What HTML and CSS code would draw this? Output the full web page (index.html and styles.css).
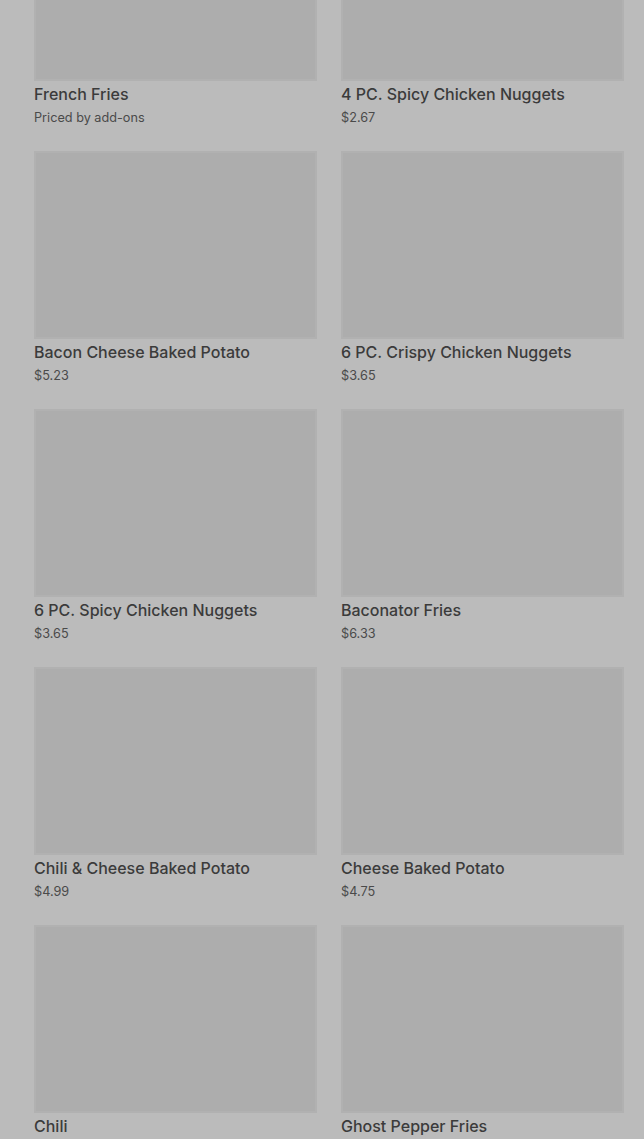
FILE: index.html
```html
<!DOCTYPE html>
<html lang="en">
<head>
  <meta charset="UTF-8">
  <meta name="viewport" content="width=device-width, initial-scale=1.0">
  <title>Menu</title>
  <link rel="stylesheet" href="styles.css">
</head>
<body>

  <!-- menu items, page is scrolled a bit -->
  <main class="menu">
    <div class="menu-grid">
      <div class="item">
        <div class="item-img"></div>
        <h3>French Fries</h3>
        <p>Priced by add-ons</p>
      </div>
      <div class="item">
        <div class="item-img"></div>
        <h3>4 PC. Spicy Chicken Nuggets</h3>
        <p>$2.67</p>
      </div>
      <div class="item">
        <div class="item-img"></div>
        <h3>Bacon Cheese Baked Potato</h3>
        <p>$5.23</p>
      </div>
      <div class="item">
        <div class="item-img"></div>
        <h3>6 PC. Crispy Chicken Nuggets</h3>
        <p>$3.65</p>
      </div>
      <div class="item">
        <div class="item-img"></div>
        <h3>6 PC. Spicy Chicken Nuggets</h3>
        <p>$3.65</p>
      </div>
      <div class="item">
        <div class="item-img"></div>
        <h3>Baconator Fries</h3>
        <p>$6.33</p>
      </div>
      <div class="item">
        <div class="item-img"></div>
        <h3>Chili &amp; Cheese Baked Potato</h3>
        <p>$4.99</p>
      </div>
      <div class="item">
        <div class="item-img"></div>
        <h3>Cheese Baked Potato</h3>
        <p>$4.75</p>
      </div>
      <div class="item">
        <div class="item-img"></div>
        <h3>Chili</h3>
        <p>$3.10</p>
      </div>
      <div class="item">
        <div class="item-img"></div>
        <h3>Ghost Pepper Fries</h3>
        <p>$3.49</p>
      </div>
    </div>
  </main>

</body>
</html>
```

FILE: styles.css
```css
* {
  margin: 0;
  padding: 0;
  box-sizing: border-box;
}

body {
  font-family: Inter, Roboto, "Liberation Sans", Arial, sans-serif;
  background: #bbbbbb;
  color: #3a3a3a;
  height: 100vh;
  overflow: hidden;
}

.menu {
  padding: 0 20px 0 34px;
}

.menu-grid {
  display: grid;
  grid-template-columns: 283px 283px;
  column-gap: 24px;
  row-gap: 23px;
  margin-top: -107px; /* scrolled */
}

.item-img {
  height: 188px;
  background-color: #adadad;
  border: 2px solid #b1b1b1;
}

.item h3 {
  margin-top: 2px;
  font-size: 16px;
  line-height: 22px;
  font-weight: 500;
  color: #3b3b3b;
}

.item p {
  margin-top: 2px;
  font-size: 12.7px;
  line-height: 21px;
  color: #4a4a4a;
}
```
